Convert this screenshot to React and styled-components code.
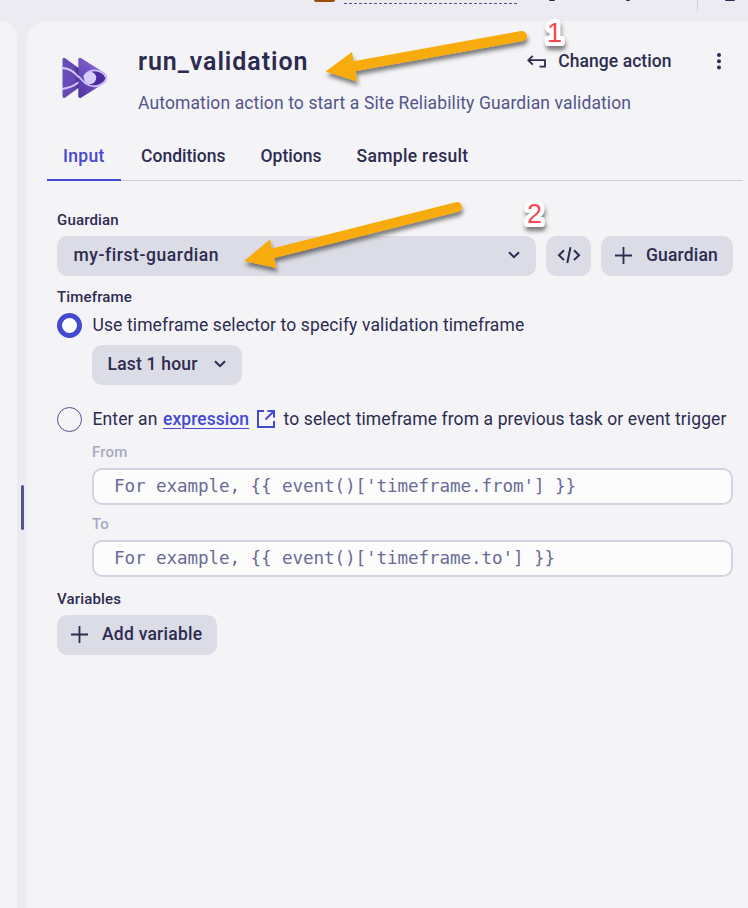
import React from "react";
import styled, { createGlobalStyle } from "styled-components";

const ink = "#2c2b50";
const accent = "#4549d1";
const control = "#dcdce6";

const GlobalStyle = createGlobalStyle`
  * { box-sizing: border-box; }
  html, body { margin: 0; padding: 0; overflow: hidden; }
  body { background: #ecebf2; color: ${ink}; font-family: Roboto, "Noto Sans", sans-serif; }
  button, input { font: inherit; color: inherit; }
`;

const Screen = styled.div`
  position: relative;
  width: 748px;
  height: 908px;
  display: flex;
  flex-direction: column;
  background: #ecebf2;
`;

const TopBar = styled.header`
  height: 21px;
  flex: none;
  display: flex;
  align-items: flex-start;
  padding-left: 314px;
`;
const BrownTag = styled.span`
  width: 21px;
  height: 2px;
  border-radius: 0 0 2px 2px;
  background: #9b4c0a;
`;
const DashedRule = styled.span`
  width: 173px;
  height: 4px;
  margin-left: 9px;
  border-bottom: 1px dashed #53548b;
`;
const Stub = styled.span`
  width: ${(p) => p.$w}px;
  height: ${(p) => p.$h}px;
  margin-left: ${(p) => p.$gap}px;
  border-radius: 0 0 4px 4px;
  background: ${ink};
`;
const TopDivider = styled.span`
  width: 1px;
  height: 11px;
  margin-left: 67px;
  background: #cfcedd;
`;

const Workspace = styled.div`
  flex: 1;
  display: flex;
  min-height: 0;
`;
const SidePanel = styled.div`
  width: 17px;
  background: #f4f4f7;
  border-top-right-radius: 18px;
`;
const Splitter = styled.div`
  width: 10px;
  display: flex;
  justify-content: center;
  padding-top: 464px;
  padding-left: 1px;
`;
const Grip = styled.span`
  width: 3px;
  height: 45px;
  border-radius: 2px;
  background: #53548b;
`;
const Panel = styled.main`
  flex: 1;
  min-width: 0;
  background: #f4f4f7;
  border-top-left-radius: 20px;
`;

const Header = styled.div`
  height: 111px;
  display: flex;
  padding: 27px 26.5px 0 35px;
`;
const LogoIcon = styled.svg`
  width: 46px;
  height: 42px;
  margin-top: 9px;
  flex: none;
`;
const Heading = styled.div`
  flex: 1;
  min-width: 0;
  padding-left: 30px;
`;
const TitleRow = styled.div`
  height: 28px;
  display: flex;
  align-items: center;
`;
const Title = styled.h1`
  margin: 0;
  flex: 1;
  font-size: 25px;
  line-height: 28px;
  font-weight: 600;
  letter-spacing: 0.93px;
`;
const Description = styled.p`
  margin: 15px 0 0;
  font-size: 17.5px;
  line-height: 24px;
  letter-spacing: 0.12px;
  white-space: nowrap;
  color: #53548b;
`;
const GhostButton = styled.button`
  display: flex;
  align-items: center;
  gap: 12px;
  padding: 0 0 2px;
  border: 0;
  background: none;
  font-size: 17.5px;
  font-weight: 500;
  white-space: nowrap;
  letter-spacing: 0.05px;
`;
const MenuButton = styled(GhostButton)`
  margin-left: 44px;
`;

const Tabs = styled.nav`
  height: 49px;
  display: flex;
  margin: 0 5px 0 20px;
  border-bottom: 1px solid #cfcfe0;
`;
const Tab = styled.button`
  height: 49px;
  padding: 1px ${(p) => p.$right}px 0 ${(p) => p.$left}px;
  border: 0;
  border-bottom: 2px solid ${(p) => (p.$active ? accent : "transparent")};
  background: none;
  color: ${(p) => (p.$active ? accent : ink)};
  font-size: 17.5px;
  font-weight: 500;
  letter-spacing: ${(p) => p.$track}px;
  white-space: nowrap;
`;

const Form = styled.div`
  display: flex;
  flex-direction: column;
  padding: 30px 15px 0 30px;
`;
const Label = styled.label`
  font-size: 15px;
  line-height: 18px;
  height: ${(p) => p.$h}px;
  font-weight: 500;
  letter-spacing: 0.16px;
  color: ${(p) => (p.$muted ? "#a9a9c1" : ink)};
`;
const ControlRow = styled.div`
  display: flex;
  gap: 10px;
  margin-bottom: 12px;
`;
const ControlButton = styled.button`
  width: ${(p) => p.$w}px;
  height: 40px;
  display: flex;
  align-items: center;
  justify-content: ${(p) => p.$justify || "flex-start"};
  gap: ${(p) => p.$gap || 0}px;
  padding: 0 ${(p) => p.$pad || 0}px 2px;
  border: 0;
  border-radius: 10px;
  background: ${control};
  font-size: 17.5px;
  font-weight: 500;
  letter-spacing: ${(p) => p.$track || 0.2}px;
  white-space: nowrap;
`;
const RadioRow = styled.div`
  display: flex;
  align-items: center;
  height: 26px;
  margin-top: ${(p) => p.$top || 0}px;
  font-size: 17.5px;
  letter-spacing: 0.11px;
  white-space: nowrap;
`;
const Radio = styled.span`
  width: 25px;
  height: 25px;
  flex: none;
  margin-right: 10.5px;
  border-radius: 50%;
  border: ${(p) => (p.$on ? `5px solid ${accent}` : "1px solid #53548b")};
  background: ${(p) => (p.$on ? "#fcfcfd" : "transparent")};
`;
const ExprLink = styled.a`
  margin: 0 8px 0 5.5px;
  color: ${accent};
  font-weight: 500;
  text-decoration: underline;
  text-decoration-thickness: 1px;
  text-underline-offset: 3px;
  letter-spacing: 0.06px;
`;
const Tail = styled.span`
  margin-left: 8.5px;
`;
const Nested = styled.div`
  display: flex;
  flex-direction: column;
  padding-left: 35px;
  margin-top: ${(p) => p.$top}px;
`;
const Field = styled.input`
  height: 37px;
  width: 100%;
  padding: 0 20px 1px;
  margin-bottom: ${(p) => p.$bottom}px;
  border: 2px solid #d3d2e1;
  border-radius: 10px;
  outline: 0;
  background: #fcfcfd;
  font-family: "DejaVu Sans Mono", monospace;
  font-size: 17.6px;
  letter-spacing: -0.09px;
  &::placeholder { color: #6a6b95; opacity: 1; }
`;
const Glyph = styled.svg`
  flex: none;
  fill: none;
  stroke: ${(p) => p.$color || ink};
  stroke-width: ${(p) => p.$stroke ?? 2};
`;
const Annotations = styled.svg`
  position: absolute;
  inset: 0;
  pointer-events: none;
`;

const Chevron = () => (
  <Glyph width="12" height="8" viewBox="0 0 12 8"><path d="M1 1.2 6 6.2 11 1.2" /></Glyph>
);
const Plus = () => (
  <Glyph width="17" height="17" viewBox="0 0 17 17" $stroke={1.8}><path d="M8.5 0v17M0 8.5h17" /></Glyph>
);

const Logo = () => (
  <LogoIcon viewBox="0 0 46 42">
    <defs>
      <linearGradient id="back" x1="0" y1="0" x2="1" y2="0">
        <stop offset="0" stopColor="#6c4db9" /><stop offset=".4" stopColor="#6548b4" /><stop offset=".58" stopColor="#3c247f" />
      </linearGradient>
      <linearGradient id="front" x1="0" y1="1" x2=".7" y2="0">
        <stop offset="0" stopColor="#4d319f" /><stop offset="1" stopColor="#8a6bd8" />
      </linearGradient>
      <clipPath id="backClip"><path d="M0 2Q1 0 3 1L17 11V32L3 41Q0 42 0 39Z" /></clipPath>
    </defs>
    <path d="M.5 2.5Q.5 .1 3 1L30 21 3 40.7Q.5 41.8 .5 39Z" fill="url(#back)" />
    <path d="M0 11C8 11 13 15 18 22M0 32C7 31 12 29 17 25" fill="none" stroke="#d4c9fa" strokeWidth="1.8" clipPath="url(#backClip)" />
    <path d="M16.3 2.5Q16.3 .1 19 1L42.5 16Q47 21 42.5 26L19 40.7Q16.3 41.8 16.3 39Z" fill="url(#front)" />
    <path d="M26 14.5Q38 10 45 20.5 39 30 28 28Z" fill="#4b2b9d" />
    <path d="M16.4 19C20 23.2 24.5 29.3 32.5 29.3 38.5 29.3 43 25.3 44.5 21 43 16.5 37 12.8 31 13.5 26 14 23.6 17 21.8 20" fill="none" stroke="#cec1f8" strokeWidth="1.8" />
    <circle cx="28" cy="21" r="6.2" fill="#d7cdfc" />
  </LogoIcon>
);

const Arrow = ({ d, head }) => (
  <g filter="url(#drop)">
    <path d={d} stroke="#f8ab0a" strokeWidth="10" strokeLinecap="round" fill="none" />
    <path d={head} fill="#f8ab0a" />
  </g>
);
const MarkerText = styled.text`
  font-family: "Liberation Sans", Arial, sans-serif;
  font-size: 27px;
  fill: #fb4650;
  stroke: #fff;
  stroke-width: 8px;
  stroke-linejoin: round;
  paint-order: stroke;
`;

export default function App() {
  return (
    <>
      <GlobalStyle />
      <Screen>
        <TopBar>
          <BrownTag />
          <DashedRule />
          <Stub $w={6} $h={1} $gap={32} />
          <Stub $w={4} $h={1} $gap={71} />
          <TopDivider />
          <Stub $w={10} $h={1} $gap={27} />
        </TopBar>
        <Workspace>
          <SidePanel />
          <Splitter><Grip /></Splitter>
          <Panel>
            <Header>
              <Logo />
              <Heading>
                <TitleRow>
                  <Title>run_validation</Title>
                  <GhostButton>
                    <Glyph width="19" height="13" viewBox="0 0 19 13" $stroke={1.8}>
                      <path d="M5.8 .8 1.3 5.2 5.8 9.6M1.3 5.2H18V11.7H12.5" />
                    </Glyph>
                    Change action
                  </GhostButton>
                  <MenuButton aria-label="More">
                    <Glyph width="6" height="18" viewBox="0 0 6 18" $stroke={0}>
                      <g fill={ink}><circle cx="3" cy="3" r="2" /><circle cx="3" cy="9.2" r="2" /><circle cx="3" cy="15.5" r="2" /></g>
                    </Glyph>
                  </MenuButton>
                </TitleRow>
                <Description>Automation action to start a Site Reliability Guardian validation</Description>
              </Heading>
            </Header>
            <Tabs>
              <Tab $active $left={16} $right={16} $track={0.33}>Input</Tab>
              <Tab $left={20.3} $right={17.5} $track={0}>Conditions</Tab>
              <Tab $left={17.5} $right={17.5} $track={0.03}>Options</Tab>
              <Tab $left={17.5} $right={17} $track={0.33}>Sample result</Tab>
            </Tabs>
            <Form>
              <Label $h={25}>Guardian</Label>
              <ControlRow>
                <ControlButton $w={479} $pad={16.5} $justify="space-between" $track={0.57}>
                  my-first-guardian <Chevron />
                </ControlButton>
                <ControlButton $w={45} $justify="center" aria-label="Expression">
                  <Glyph width="24" height="18" viewBox="0 0 24 18"><path d="M7 4.3 2 9.2 7 14.1M17 4.3 22 9.2 17 14.1M13.5 1.3 10.3 17" /></Glyph>
                </ControlButton>
                <ControlButton $w={132} $pad={14} $gap={14} $track={0.17}><Plus />Guardian</ControlButton>
              </ControlRow>
              <Label $h={24}>Timeframe</Label>
              <RadioRow><Radio $on />Use timeframe selector to specify validation timeframe</RadioRow>
              <Nested $top={7}>
                <ControlButton $w={150} $pad={15.5} $gap={16}>Last 1 hour <Chevron /></ControlButton>
              </Nested>
              <RadioRow $top={21}>
                <Radio />Enter an
                <ExprLink>expression</ExprLink>
                <Glyph width="18" height="18" viewBox="0 0 18 18" $color={accent}>
                  <path d="M7 1H1V17H17V11M10.5 1H17V7.5M17 1 8.5 9.5" />
                </Glyph>
                <Tail>to select timeframe from a previous task or event trigger</Tail>
              </RadioRow>
              <Nested $top={11}>
                <Label $muted $h={25}>From</Label>
                <Field $bottom={10} placeholder="For example, {{ event()['timeframe.from'] }}" />
                <Label $muted $h={25}>To</Label>
                <Field $bottom={13} placeholder="For example, {{ event()['timeframe.to'] }}" />
              </Nested>
              <Label $h={25}>Variables</Label>
              <ControlButton $w={160} $pad={14} $gap={14} $track={0.24}><Plus />Add variable</ControlButton>
            </Form>
          </Panel>
        </Workspace>
        <Annotations width="748" height="908" viewBox="0 0 748 908">
          <defs>
            <filter id="drop" x="-20%" y="-40%" width="140%" height="200%">
              <feDropShadow dx="1" dy="4" stdDeviation="2.2" floodColor="#000" floodOpacity=".5" />
            </filter>
          </defs>
          <Arrow d="M522 36 350 67" head="M325.5 71.5 352 52 357.5 81.5Z" />
          <Arrow d="M457 207 270 254" head="M244 261 270 239.5 276.5 268Z" />
          <g filter="url(#drop)">
            <MarkerText x="547" y="41.5">1</MarkerText>
            <MarkerText x="527" y="222.5">2</MarkerText>
          </g>
        </Annotations>
      </Screen>
    </>
  );
}
